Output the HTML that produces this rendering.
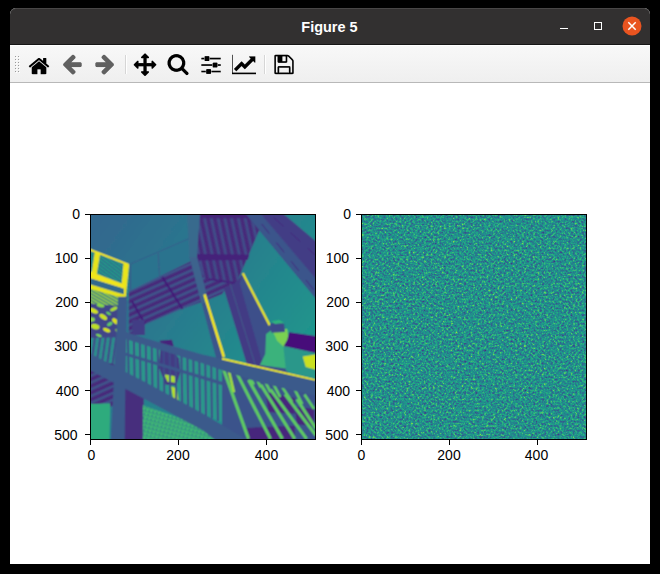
<!DOCTYPE html>
<html><head><meta charset="utf-8">
<style>
html,body{margin:0;padding:0;background:#000;width:660px;height:574px;overflow:hidden;font-family:"Liberation Sans",sans-serif;}
#win{position:absolute;left:10px;top:8px;width:640px;height:556px;background:#fff;border-radius:6px 6px 0 0;overflow:hidden;}
#title{position:absolute;left:0;top:0;width:640px;height:37px;background:#323030;border-radius:6px 6px 0 0;box-shadow:inset 0 1px 0 #484646, inset 0 -1px 0 #161616;}
#tb{position:absolute;left:0;top:37px;width:640px;height:37px;background:linear-gradient(#f8f8f8,#efefef);border-bottom:1px solid #b8b8b8;box-shadow:inset 0 1px 0 #fff;}
svg{position:absolute;left:0;top:0;}
.tl{font-family:"Liberation Sans",sans-serif;font-size:14px;fill:#000;}
.tt{font-family:"Liberation Sans",sans-serif;font-size:15px;font-weight:bold;fill:#fff;}
</style></head><body>
<div id="win"><div id="title"></div><div id="tb"></div></div>
<svg width="660" height="574" viewBox="0 0 660 574">
<text x="329.5" y="32" text-anchor="middle" class="tt" transform="translate(329.5 0) scale(0.965 1) translate(-329.5 0)">Figure 5</text>
<rect x="560" y="28" width="8" height="1" fill="#fff"/>
<rect x="594.5" y="22.5" width="7" height="7" fill="none" stroke="#fff" stroke-width="1"/>
<circle cx="632" cy="26" r="9.5" fill="#e95420"/>
<path d="M628.3 22.3 L635.7 29.7 M635.7 22.3 L628.3 29.7" stroke="#fff" stroke-width="1.5"/>
<rect x="15" y="56" width="1" height="1" fill="#9a9a9a"/><rect x="16" y="57" width="1" height="1" fill="#fff"/><rect x="15" y="59" width="1" height="1" fill="#9a9a9a"/><rect x="16" y="60" width="1" height="1" fill="#fff"/><rect x="15" y="62" width="1" height="1" fill="#9a9a9a"/><rect x="16" y="63" width="1" height="1" fill="#fff"/><rect x="15" y="65" width="1" height="1" fill="#9a9a9a"/><rect x="16" y="66" width="1" height="1" fill="#fff"/><rect x="15" y="68" width="1" height="1" fill="#9a9a9a"/><rect x="16" y="69" width="1" height="1" fill="#fff"/><rect x="15" y="71" width="1" height="1" fill="#9a9a9a"/><rect x="16" y="72" width="1" height="1" fill="#fff"/><rect x="18" y="56" width="1" height="1" fill="#9a9a9a"/><rect x="19" y="57" width="1" height="1" fill="#fff"/><rect x="18" y="59" width="1" height="1" fill="#9a9a9a"/><rect x="19" y="60" width="1" height="1" fill="#fff"/><rect x="18" y="62" width="1" height="1" fill="#9a9a9a"/><rect x="19" y="63" width="1" height="1" fill="#fff"/><rect x="18" y="65" width="1" height="1" fill="#9a9a9a"/><rect x="19" y="66" width="1" height="1" fill="#fff"/><rect x="18" y="68" width="1" height="1" fill="#9a9a9a"/><rect x="19" y="69" width="1" height="1" fill="#fff"/><rect x="18" y="71" width="1" height="1" fill="#9a9a9a"/><rect x="19" y="72" width="1" height="1" fill="#fff"/>
<rect x="125" y="55" width="1" height="19" fill="#d6d6d6"/><rect x="126" y="55" width="1" height="19" fill="#fff"/>
<rect x="264" y="55" width="1" height="19" fill="#d6d6d6"/><rect x="265" y="55" width="1" height="19" fill="#fff"/>
<g transform="translate(27 52)"><path fill-opacity="0.07" d="M6 9h1v1h-1zM1 14h1v1h-1zM22 14h1v1h-1zM10 22h1v1h-1zM13 22h1v1h-1z"/><path fill-opacity="0.13" d="M5 10h1v1h-1zM5 22h1v1h-1zM18 22h1v1h-1z"/><path fill-opacity="0.20" d="M8 11h1v1h-1zM15 11h1v1h-1zM7 12h1v1h-1zM16 12h1v1h-1zM2 15h1v1h-1zM4 15h1v1h-1zM20 15h2v1h-2zM4 21h1v1h-1zM6 22h4v1h-4zM14 22h4v1h-4z"/><path fill-opacity="0.27" d="M10 6h1v1h-1zM13 6h1v1h-1zM19 6h1v1h-1zM9 10h1v1h-1zM14 10h1v1h-1zM4 11h1v1h-1zM6 13h1v1h-1zM17 13h1v1h-1zM3 15h1v1h-1zM19 15h1v1h-1zM4 16h1v1h-1zM4 17h1v1h-1zM4 18h1v1h-1zM4 19h1v1h-1zM4 20h1v1h-1zM19 21h1v1h-1z"/><path fill-opacity="0.33" d="M19 7h1v1h-1zM19 8h1v1h-1zM11 9h1v1h-1zM13 9h1v1h-1zM19 9h1v1h-1zM19 10h1v1h-1zM19 14h1v1h-1zM19 16h1v1h-1zM11 17h2v1h-2zM19 17h1v1h-1zM13 18h1v1h-1zM19 18h1v1h-1zM13 19h1v1h-1zM19 19h1v1h-1zM13 20h1v1h-1zM19 20h1v1h-1zM13 21h1v1h-1z"/><path fill-opacity="0.40" d="M9 7h1v1h-1zM10 9h1v1h-1zM12 9h1v1h-1zM19 11h1v1h-1zM3 12h1v1h-1zM4 14h2v1h-2zM18 14h1v1h-1zM10 18h1v1h-1zM10 19h1v1h-1zM10 20h1v1h-1zM10 21h1v1h-1z"/><path fill-opacity="0.47" d="M14 7h1v1h-1zM20 12h1v1h-1z"/><path fill-opacity="0.53" d="M11 8h2v1h-2zM10 10h1v1h-1zM13 10h1v1h-1zM5 13h1v1h-1zM18 13h1v1h-1z"/><path fill-opacity="0.60" d="M8 8h1v1h-1zM15 8h1v1h-1zM2 13h1v1h-1zM21 13h1v1h-1zM10 17h1v1h-1zM13 17h1v1h-1z"/><path fill-opacity="0.67" d="M9 11h1v1h-1zM17 12h1v1h-1z"/><path fill-opacity="0.73" d="M7 9h1v1h-1zM14 11h1v1h-1zM6 12h1v1h-1z"/><path fill-opacity="0.80" d="M16 11h1v1h-1zM8 12h1v1h-1z"/><path fill-opacity="0.87" d="M16 6h1v1h-1zM6 10h1v1h-1zM7 11h1v1h-1zM15 12h1v1h-1z"/><path fill-opacity="0.93" d="M11 6h2v1h-2zM16 7h1v1h-1zM16 8h1v1h-1zM8 10h1v1h-1zM15 10h1v1h-1zM5 11h1v1h-1zM7 13h1v1h-1zM16 13h1v1h-1zM2 14h1v1h-1zM21 14h1v1h-1z"/><path d="M17 6h2v1h-2zM10 7h4v1h-4zM17 7h2v1h-2zM9 8h2v1h-2zM13 8h2v1h-2zM17 8h2v1h-2zM8 9h2v1h-2zM14 9h5v1h-5zM7 10h1v1h-1zM11 10h2v1h-2zM16 10h3v1h-3zM6 11h1v1h-1zM10 11h4v1h-4zM17 11h2v1h-2zM4 12h2v1h-2zM9 12h6v1h-6zM18 12h2v1h-2zM3 13h2v1h-2zM8 13h8v1h-8zM19 13h2v1h-2zM3 14h1v1h-1zM6 14h12v1h-12zM20 14h1v1h-1zM5 15h14v1h-14zM5 16h14v1h-14zM5 17h5v1h-5zM14 17h5v1h-5zM5 18h5v1h-5zM14 18h5v1h-5zM5 19h5v1h-5zM14 19h5v1h-5zM5 20h5v1h-5zM14 20h5v1h-5zM5 21h5v1h-5zM14 21h5v1h-5z"/></g>
<g transform="translate(60 52)" opacity="0.6"><path fill-opacity="0.07" d="M12 15h8v1h-8zM13 16h1v1h-1zM14 17h1v1h-1zM15 18h1v1h-1z"/><path fill-opacity="0.13" d="M12 2h2v1h-2zM15 6h1v1h-1zM14 7h1v1h-1zM13 8h1v1h-1zM12 9h1v1h-1zM21 10h1v1h-1z"/><path fill-opacity="0.27" d="M15 4h1v1h-1z"/><path fill-opacity="0.33" d="M21 14h1v1h-1zM13 22h1v1h-1z"/><path fill-opacity="0.40" d="M11 3h1v1h-1zM14 3h1v1h-1zM10 4h1v1h-1zM3 11h1v1h-1zM15 20h1v1h-1zM12 22h1v1h-1z"/><path fill-opacity="0.47" d="M9 5h1v1h-1zM8 6h1v1h-1zM7 7h1v1h-1zM6 8h1v1h-1zM5 9h1v1h-1zM4 10h1v1h-1zM15 19h1v1h-1z"/><path fill-opacity="0.53" d="M15 5h1v1h-1z"/><path fill-opacity="0.60" d="M3 13h1v1h-1zM14 21h1v1h-1z"/><path fill-opacity="0.67" d="M21 11h1v1h-1zM4 14h1v1h-1zM5 15h1v1h-1zM6 16h1v1h-1zM7 17h1v1h-1zM8 18h1v1h-1zM9 19h1v1h-1zM10 20h1v1h-1zM11 21h1v1h-1z"/><path fill-opacity="0.73" d="M20 10h1v1h-1zM21 12h1v1h-1zM21 13h1v1h-1zM12 16h1v1h-1zM13 17h1v1h-1zM14 18h1v1h-1z"/><path fill-opacity="0.80" d="M12 10h8v1h-8zM11 15h1v1h-1z"/><path fill-opacity="0.87" d="M11 10h1v1h-1zM3 12h1v1h-1z"/><path fill-opacity="0.93" d="M14 6h1v1h-1zM13 7h1v1h-1zM12 8h1v1h-1zM11 9h1v1h-1z"/><path d="M12 3h2v1h-2zM11 4h4v1h-4zM10 5h5v1h-5zM9 6h5v1h-5zM8 7h5v1h-5zM7 8h5v1h-5zM6 9h5v1h-5zM5 10h6v1h-6zM4 11h17v1h-17zM4 12h17v1h-17zM4 13h17v1h-17zM5 14h16v1h-16zM6 15h5v1h-5zM7 16h5v1h-5zM8 17h5v1h-5zM9 18h5v1h-5zM10 19h5v1h-5zM11 20h4v1h-4zM12 21h2v1h-2z"/></g>
<g transform="translate(93 52)" opacity="0.6"><path fill-opacity="0.07" d="M8 6h1v1h-1zM4 15h8v1h-8z"/><path fill-opacity="0.13" d="M10 2h2v1h-2zM9 7h1v1h-1zM10 8h1v1h-1zM11 9h1v1h-1zM2 10h1v1h-1z"/><path fill-opacity="0.20" d="M8 4h1v1h-1z"/><path fill-opacity="0.27" d="M2 14h1v1h-1z"/><path fill-opacity="0.33" d="M9 3h1v1h-1zM8 20h1v1h-1zM10 22h1v1h-1z"/><path fill-opacity="0.40" d="M8 19h1v1h-1zM11 22h1v1h-1z"/><path fill-opacity="0.47" d="M12 3h1v1h-1zM13 4h1v1h-1zM8 5h1v1h-1zM14 5h1v1h-1zM15 6h1v1h-1zM16 7h1v1h-1zM17 8h1v1h-1zM18 9h1v1h-1zM19 10h1v1h-1zM20 11h1v1h-1z"/><path fill-opacity="0.60" d="M9 21h1v1h-1z"/><path fill-opacity="0.67" d="M2 11h1v1h-1zM2 12h1v1h-1zM2 13h1v1h-1zM20 13h1v1h-1z"/><path fill-opacity="0.73" d="M3 10h1v1h-1zM19 14h1v1h-1zM12 15h1v1h-1zM18 15h1v1h-1zM11 16h1v1h-1zM17 16h1v1h-1zM10 17h1v1h-1zM16 17h1v1h-1zM9 18h1v1h-1zM15 18h1v1h-1zM14 19h1v1h-1zM13 20h1v1h-1zM12 21h1v1h-1z"/><path fill-opacity="0.80" d="M4 10h8v1h-8z"/><path fill-opacity="0.87" d="M9 6h1v1h-1zM10 7h1v1h-1zM11 8h1v1h-1zM12 9h1v1h-1zM12 10h1v1h-1zM20 12h1v1h-1z"/><path d="M10 3h2v1h-2zM9 4h4v1h-4zM9 5h5v1h-5zM10 6h5v1h-5zM11 7h5v1h-5zM12 8h5v1h-5zM13 9h5v1h-5zM13 10h6v1h-6zM3 11h17v1h-17zM3 12h17v1h-17zM3 13h17v1h-17zM3 14h16v1h-16zM13 15h5v1h-5zM12 16h5v1h-5zM11 17h5v1h-5zM10 18h5v1h-5zM9 19h5v1h-5zM9 20h4v1h-4zM10 21h2v1h-2z"/></g>
<g transform="translate(133 52)"><path fill-opacity="0.07" d="M5 8h1v1h-1zM18 8h1v1h-1zM0 13h1v1h-1zM23 13h1v1h-1zM1 14h1v1h-1zM22 14h1v1h-1zM2 15h1v1h-1zM21 15h1v1h-1zM3 16h1v1h-1zM20 16h1v1h-1zM8 21h1v1h-1zM15 21h1v1h-1zM9 22h1v1h-1zM14 22h1v1h-1zM10 23h1v1h-1zM13 23h1v1h-1z"/><path fill-opacity="0.13" d="M8 6h1v1h-1zM15 6h1v1h-1z"/><path fill-opacity="0.20" d="M4 8h1v1h-1zM0 12h1v1h-1z"/><path fill-opacity="0.27" d="M9 6h1v1h-1zM14 6h1v1h-1zM19 8h1v1h-1zM23 12h1v1h-1zM5 16h1v1h-1zM18 16h1v1h-1z"/><path fill-opacity="0.33" d="M11 1h1v1h-1zM6 14h4v1h-4zM14 14h4v1h-4z"/><path fill-opacity="0.40" d="M12 1h1v1h-1zM10 2h1v1h-1zM9 3h1v1h-1zM8 4h1v1h-1zM3 9h1v1h-1zM2 10h1v1h-1zM1 11h1v1h-1z"/><path fill-opacity="0.47" d="M13 2h1v1h-1zM14 3h1v1h-1zM15 4h1v1h-1zM18 9h1v1h-1zM20 9h1v1h-1zM21 10h1v1h-1zM22 11h1v1h-1zM18 15h1v1h-1z"/><path fill-opacity="0.53" d="M5 9h1v1h-1zM5 10h1v1h-1zM18 10h1v1h-1zM5 15h1v1h-1z"/><path fill-opacity="0.60" d="M10 7h1v1h-1zM10 8h1v1h-1zM10 9h1v1h-1zM10 10h1v1h-1zM10 15h1v1h-1zM10 16h1v1h-1zM10 17h1v1h-1zM10 18h1v1h-1z"/><path fill-opacity="0.67" d="M10 6h1v1h-1zM13 7h1v1h-1zM13 8h1v1h-1zM13 9h1v1h-1zM13 10h1v1h-1zM5 14h1v1h-1zM18 14h1v1h-1zM13 15h1v1h-1zM4 16h1v1h-1zM13 16h1v1h-1zM19 16h1v1h-1zM13 17h1v1h-1zM13 18h1v1h-1zM8 19h1v1h-1zM15 19h1v1h-1z"/><path fill-opacity="0.73" d="M13 6h1v1h-1zM10 14h1v1h-1zM13 14h1v1h-1z"/><path fill-opacity="0.80" d="M1 13h1v1h-1zM22 13h1v1h-1zM2 14h1v1h-1zM21 14h1v1h-1zM3 15h1v1h-1zM20 15h1v1h-1zM9 19h1v1h-1zM14 19h1v1h-1zM8 20h1v1h-1zM15 20h1v1h-1zM9 21h1v1h-1zM14 21h1v1h-1zM10 22h1v1h-1zM13 22h1v1h-1zM11 23h2v1h-2z"/><path fill-opacity="0.93" d="M8 5h1v1h-1zM5 11h6v1h-6zM13 11h6v1h-6zM10 19h1v1h-1zM13 19h1v1h-1z"/><path d="M11 2h2v1h-2zM10 3h4v1h-4zM9 4h6v1h-6zM9 5h7v1h-7zM11 6h2v1h-2zM11 7h2v1h-2zM11 8h2v1h-2zM4 9h1v1h-1zM11 9h2v1h-2zM19 9h1v1h-1zM3 10h2v1h-2zM11 10h2v1h-2zM19 10h2v1h-2zM2 11h3v1h-3zM11 11h2v1h-2zM19 11h3v1h-3zM1 12h22v1h-22zM2 13h20v1h-20zM3 14h2v1h-2zM11 14h2v1h-2zM19 14h2v1h-2zM4 15h1v1h-1zM11 15h2v1h-2zM19 15h1v1h-1zM11 16h2v1h-2zM11 17h2v1h-2zM11 18h2v1h-2zM11 19h2v1h-2zM9 20h6v1h-6zM10 21h4v1h-4zM11 22h2v1h-2z"/></g>
<g transform="translate(166 52)"><path fill-opacity="0.07" d="M18 6h1v1h-1zM5 12h1v1h-1zM1 13h1v1h-1zM20 23h1v1h-1z"/><path fill-opacity="0.13" d="M7 6h1v1h-1zM6 7h1v1h-1zM1 8h1v1h-1zM15 9h1v1h-1zM6 14h1v1h-1zM18 15h1v1h-1zM22 22h1v1h-1z"/><path fill-opacity="0.20" d="M14 7h1v1h-1zM19 9h1v1h-1zM15 12h1v1h-1zM19 12h1v1h-1zM2 15h1v1h-1zM7 15h1v1h-1zM22 20h1v1h-1z"/><path fill-opacity="0.27" d="M13 2h1v1h-1zM2 6h1v1h-1zM13 6h1v1h-1zM19 10h1v1h-1zM19 11h1v1h-1zM14 14h1v1h-1zM18 16h1v1h-1zM19 17h1v1h-1zM20 18h1v1h-1zM7 19h1v1h-1zM13 19h1v1h-1zM21 19h1v1h-1z"/><path fill-opacity="0.33" d="M15 3h1v1h-1zM9 5h2v1h-2zM13 15h1v1h-1zM16 19h1v1h-1zM17 20h1v1h-1zM18 21h1v1h-1zM19 22h1v1h-1z"/><path fill-opacity="0.40" d="M7 2h1v1h-1zM16 4h1v1h-1zM11 5h1v1h-1zM17 5h1v1h-1zM5 8h1v1h-1zM1 9h1v1h-1zM1 12h1v1h-1zM5 13h1v1h-1zM10 16h1v1h-1zM5 18h1v1h-1z"/><path fill-opacity="0.47" d="M5 3h1v1h-1zM18 7h1v1h-1zM1 10h1v1h-1zM1 11h1v1h-1zM3 16h1v1h-1zM9 16h1v1h-1zM11 16h1v1h-1zM4 17h1v1h-1z"/><path fill-opacity="0.53" d="M15 8h1v1h-1zM18 14h1v1h-1zM15 18h1v1h-1zM12 19h1v1h-1zM22 21h1v1h-1z"/><path fill-opacity="0.60" d="M4 4h1v1h-1zM3 5h1v1h-1zM15 13h1v1h-1z"/><path fill-opacity="0.67" d="M12 2h1v1h-1zM8 5h1v1h-1zM2 7h1v1h-1zM2 14h1v1h-1zM8 19h1v1h-1z"/><path fill-opacity="0.73" d="M8 2h1v1h-1z"/><path fill-opacity="0.80" d="M12 5h1v1h-1zM4 10h1v1h-1zM4 11h1v1h-1zM8 16h1v1h-1zM9 19h1v1h-1zM11 19h1v1h-1z"/><path fill-opacity="0.87" d="M9 2h1v1h-1zM11 2h1v1h-1zM14 3h1v1h-1zM6 6h1v1h-1zM5 7h1v1h-1zM18 8h1v1h-1zM18 13h1v1h-1zM5 14h1v1h-1zM6 15h1v1h-1zM12 16h1v1h-1zM6 18h1v1h-1zM14 18h1v1h-1zM10 19h1v1h-1z"/><path fill-opacity="0.93" d="M10 2h1v1h-1zM6 3h1v1h-1zM14 6h1v1h-1zM15 7h1v1h-1zM4 9h1v1h-1zM16 10h1v1h-1zM4 12h1v1h-1zM14 15h1v1h-1zM17 15h1v1h-1zM17 16h1v1h-1zM18 17h1v1h-1zM19 18h1v1h-1zM20 19h1v1h-1zM21 22h1v1h-1z"/><path d="M7 3h7v1h-7zM5 4h11v1h-11zM4 5h4v1h-4zM13 5h4v1h-4zM3 6h3v1h-3zM15 6h3v1h-3zM3 7h2v1h-2zM16 7h2v1h-2zM2 8h3v1h-3zM16 8h2v1h-2zM2 9h2v1h-2zM16 9h3v1h-3zM2 10h2v1h-2zM17 10h2v1h-2zM2 11h2v1h-2zM16 11h3v1h-3zM2 12h2v1h-2zM16 12h3v1h-3zM2 13h3v1h-3zM16 13h2v1h-2zM3 14h2v1h-2zM15 14h3v1h-3zM3 15h3v1h-3zM15 15h2v1h-2zM4 16h4v1h-4zM13 16h4v1h-4zM5 17h13v1h-13zM7 18h7v1h-7zM16 18h3v1h-3zM17 19h3v1h-3zM18 20h4v1h-4zM19 21h3v1h-3zM20 22h1v1h-1z"/></g>
<g transform="translate(199 52)"><path fill-opacity="0.07" d="M18 10h1v1h-1zM13 15h1v1h-1zM18 15h1v1h-1z"/><path fill-opacity="0.13" d="M2 5h1v1h-1z"/><path fill-opacity="0.20" d="M10 4h1v1h-1zM21 5h1v1h-1zM2 18h1v1h-1zM6 18h1v1h-1zM12 18h1v1h-1zM21 18h1v1h-1zM2 20h1v1h-1zM12 20h1v1h-1z"/><path fill-opacity="0.27" d="M5 4h1v1h-1zM3 5h2v1h-2zM11 5h10v1h-10zM2 7h1v1h-1zM21 7h1v1h-1zM10 8h1v1h-1zM3 18h3v1h-3zM13 18h8v1h-8zM6 20h1v1h-1zM21 20h1v1h-1z"/><path fill-opacity="0.33" d="M5 8h1v1h-1zM14 10h1v1h-1zM13 11h1v1h-1zM13 14h1v1h-1zM3 20h3v1h-3zM13 20h8v1h-8z"/><path fill-opacity="0.40" d="M3 7h2v1h-2zM11 7h10v1h-10zM15 10h3v1h-3z"/><path fill-opacity="0.47" d="M5 5h1v1h-1zM10 5h1v1h-1zM10 7h1v1h-1zM18 11h1v1h-1zM18 14h1v1h-1zM14 15h4v1h-4z"/><path fill-opacity="0.53" d="M5 7h1v1h-1zM2 12h1v1h-1zM13 12h1v1h-1zM13 13h1v1h-1z"/><path fill-opacity="0.60" d="M5 6h1v1h-1zM10 6h1v1h-1zM18 12h1v1h-1zM21 12h1v1h-1zM2 13h1v1h-1zM18 13h1v1h-1zM7 17h1v1h-1zM12 19h1v1h-1z"/><path fill-opacity="0.67" d="M2 6h1v1h-1zM21 13h1v1h-1zM2 19h1v1h-1zM7 21h1v1h-1z"/><path fill-opacity="0.73" d="M21 6h1v1h-1zM21 19h1v1h-1z"/><path fill-opacity="0.80" d="M3 12h10v1h-10zM19 12h2v1h-2zM11 17h1v1h-1zM6 19h1v1h-1zM11 21h1v1h-1z"/><path fill-opacity="0.87" d="M6 4h4v1h-4zM3 13h10v1h-10zM19 13h2v1h-2zM7 18h1v1h-1zM7 19h1v1h-1zM7 20h1v1h-1z"/><path fill-opacity="0.93" d="M8 17h3v1h-3zM8 21h3v1h-3z"/><path d="M6 5h4v1h-4zM3 6h2v1h-2zM6 6h4v1h-4zM11 6h10v1h-10zM6 7h4v1h-4zM6 8h4v1h-4zM14 11h4v1h-4zM14 12h4v1h-4zM14 13h4v1h-4zM14 14h4v1h-4zM8 18h4v1h-4zM3 19h3v1h-3zM8 19h4v1h-4zM13 19h8v1h-8zM8 20h4v1h-4z"/></g>
<g transform="translate(232 52)"><path fill-opacity="0.07" d="M10 9h1v1h-1zM11 10h1v1h-1zM12 11h1v1h-1zM12 17h1v1h-1z"/><path fill-opacity="0.13" d="M0 2h1v1h-1zM10 15h1v1h-1zM11 16h1v1h-1zM4 19h1v1h-1z"/><path fill-opacity="0.20" d="M23 4h1v1h-1zM23 10h1v1h-1zM8 15h1v1h-1zM7 16h1v1h-1zM6 17h1v1h-1zM5 18h1v1h-1zM0 22h24v1h-24z"/><path fill-opacity="0.27" d="M17 7h1v1h-1zM16 8h1v1h-1zM15 9h1v1h-1zM14 10h1v1h-1zM13 11h1v1h-1z"/><path fill-opacity="0.33" d="M23 5h1v1h-1zM23 6h1v1h-1zM23 7h1v1h-1zM23 8h1v1h-1zM23 9h1v1h-1zM9 14h1v1h-1z"/><path fill-opacity="0.40" d="M17 5h1v1h-1zM21 9h1v1h-1zM22 10h1v1h-1zM1 20h23v1h-23z"/><path fill-opacity="0.47" d="M9 9h1v1h-1z"/><path fill-opacity="0.53" d="M17 4h1v1h-1zM2 17h1v1h-1zM3 18h1v1h-1z"/><path fill-opacity="0.60" d="M18 4h5v1h-5zM18 6h1v1h-1z"/><path fill-opacity="0.67" d="M0 3h1v1h-1zM0 4h1v1h-1zM0 5h1v1h-1zM0 6h1v1h-1zM0 7h1v1h-1zM0 8h1v1h-1zM0 9h1v1h-1zM20 9h1v1h-1zM0 10h1v1h-1zM8 10h1v1h-1zM19 10h1v1h-1zM0 11h1v1h-1zM7 11h1v1h-1zM18 11h1v1h-1zM0 12h1v1h-1zM6 12h1v1h-1zM17 12h1v1h-1zM0 13h1v1h-1zM5 13h1v1h-1zM16 13h1v1h-1zM0 14h1v1h-1zM4 14h1v1h-1zM15 14h1v1h-1zM0 15h1v1h-1zM3 15h1v1h-1zM14 15h1v1h-1zM0 16h1v1h-1zM2 16h1v1h-1zM13 16h1v1h-1zM0 17h1v1h-1zM0 18h1v1h-1zM0 19h1v1h-1z"/><path fill-opacity="0.80" d="M10 10h1v1h-1zM11 11h1v1h-1zM12 12h1v1h-1zM0 20h1v1h-1z"/><path fill-opacity="0.87" d="M10 14h1v1h-1zM11 15h1v1h-1zM12 16h1v1h-1z"/><path fill-opacity="0.93" d="M18 7h1v1h-1zM17 8h1v1h-1zM16 9h1v1h-1zM15 10h1v1h-1zM14 11h1v1h-1zM13 12h1v1h-1zM8 14h1v1h-1zM7 15h1v1h-1zM6 16h1v1h-1zM5 17h1v1h-1zM4 18h1v1h-1z"/><path d="M18 5h5v1h-5zM19 6h4v1h-4zM19 7h4v1h-4zM18 8h5v1h-5zM17 9h3v1h-3zM22 9h1v1h-1zM9 10h1v1h-1zM16 10h3v1h-3zM8 11h3v1h-3zM15 11h3v1h-3zM7 12h5v1h-5zM14 12h3v1h-3zM6 13h10v1h-10zM5 14h3v1h-3zM11 14h4v1h-4zM4 15h3v1h-3zM12 15h2v1h-2zM3 16h3v1h-3zM3 17h2v1h-2zM0 21h24v1h-24z"/></g>
<g transform="translate(272 52)"><path fill-opacity="0.07" d="M15 10h1v1h-1z"/><path fill-opacity="0.13" d="M16 5h1v1h-1zM17 6h1v1h-1zM18 7h1v1h-1zM21 7h1v1h-1zM5 10h1v1h-1zM5 14h1v1h-1zM16 16h1v1h-1zM16 17h1v1h-1zM16 18h1v1h-1zM16 19h1v1h-1zM3 22h1v1h-1zM20 22h1v1h-1z"/><path fill-opacity="0.20" d="M3 2h1v1h-1zM15 2h1v1h-1zM19 8h1v1h-1zM18 14h1v1h-1zM7 16h1v1h-1zM7 17h1v1h-1zM7 18h1v1h-1zM7 19h1v1h-1zM4 22h16v1h-16z"/><path fill-opacity="0.27" d="M4 2h11v1h-11zM17 3h1v1h-1zM18 4h1v1h-1zM15 5h1v1h-1zM19 5h1v1h-1zM15 6h1v1h-1zM20 6h1v1h-1zM15 7h1v1h-1zM15 8h1v1h-1zM15 9h1v1h-1z"/><path fill-opacity="0.33" d="M13 5h1v1h-1zM13 6h1v1h-1zM13 7h1v1h-1zM13 8h1v1h-1z"/><path fill-opacity="0.40" d="M4 4h1v1h-1zM11 4h2v1h-2zM10 5h1v1h-1zM10 6h1v1h-1zM10 7h1v1h-1zM10 8h1v1h-1z"/><path fill-opacity="0.47" d="M5 5h1v1h-1zM5 6h1v1h-1zM5 7h1v1h-1zM5 8h1v1h-1zM5 9h1v1h-1zM5 15h1v1h-1zM18 15h1v1h-1zM5 16h1v1h-1zM5 17h1v1h-1zM5 18h1v1h-1zM5 19h1v1h-1zM4 20h1v1h-1zM8 20h9v1h-9zM19 20h1v1h-1zM2 21h1v1h-1z"/><path fill-opacity="0.53" d="M2 3h1v1h-1zM18 16h1v1h-1zM18 17h1v1h-1zM18 18h1v1h-1zM18 19h1v1h-1zM7 20h1v1h-1zM21 21h1v1h-1z"/><path fill-opacity="0.60" d="M15 4h1v1h-1zM21 8h1v1h-1z"/><path fill-opacity="0.67" d="M2 4h1v1h-1zM5 4h1v1h-1zM10 4h1v1h-1zM13 4h1v1h-1zM2 5h1v1h-1zM2 6h1v1h-1zM2 7h1v1h-1zM2 8h1v1h-1zM2 9h1v1h-1zM2 10h1v1h-1zM14 10h1v1h-1zM2 11h1v1h-1zM2 12h1v1h-1zM2 13h1v1h-1zM2 14h1v1h-1zM2 15h1v1h-1zM2 16h1v1h-1zM2 17h1v1h-1zM2 18h1v1h-1zM2 19h1v1h-1zM2 20h1v1h-1zM5 20h1v1h-1z"/><path fill-opacity="0.73" d="M21 9h1v1h-1zM21 10h1v1h-1zM21 11h1v1h-1zM21 12h1v1h-1zM21 13h1v1h-1zM21 14h1v1h-1zM7 15h10v1h-10zM21 15h1v1h-1zM21 16h1v1h-1zM21 17h1v1h-1zM21 18h1v1h-1zM21 19h1v1h-1zM18 20h1v1h-1zM21 20h1v1h-1z"/><path fill-opacity="0.80" d="M11 9h2v1h-2zM6 10h1v1h-1z"/><path fill-opacity="0.87" d="M16 3h1v1h-1zM10 9h1v1h-1zM13 9h1v1h-1zM20 9h1v1h-1zM7 10h7v1h-7zM20 10h1v1h-1zM20 11h1v1h-1zM20 12h1v1h-1zM20 13h1v1h-1zM6 14h1v1h-1zM17 14h1v1h-1zM20 14h1v1h-1zM20 15h1v1h-1zM20 16h1v1h-1zM20 17h1v1h-1zM20 18h1v1h-1zM20 19h1v1h-1z"/><path fill-opacity="0.93" d="M3 4h1v1h-1zM16 4h2v1h-2zM3 5h1v1h-1zM17 5h2v1h-2zM3 6h1v1h-1zM18 6h2v1h-2zM3 7h1v1h-1zM19 7h2v1h-2zM3 8h1v1h-1zM3 9h1v1h-1zM3 10h1v1h-1zM3 11h1v1h-1zM3 12h1v1h-1zM3 13h1v1h-1zM3 14h1v1h-1zM7 14h10v1h-10zM3 15h1v1h-1zM3 16h1v1h-1zM3 17h1v1h-1zM3 18h1v1h-1zM3 19h1v1h-1zM3 20h1v1h-1zM20 20h1v1h-1z"/><path d="M3 3h13v1h-13zM6 4h4v1h-4zM14 4h1v1h-1zM6 5h4v1h-4zM14 5h1v1h-1zM6 6h4v1h-4zM14 6h1v1h-1zM6 7h4v1h-4zM14 7h1v1h-1zM6 8h4v1h-4zM14 8h1v1h-1zM20 8h1v1h-1zM6 9h4v1h-4zM14 9h1v1h-1zM6 15h1v1h-1zM17 15h1v1h-1zM6 16h1v1h-1zM17 16h1v1h-1zM6 17h1v1h-1zM17 17h1v1h-1zM6 18h1v1h-1zM17 18h1v1h-1zM6 19h1v1h-1zM17 19h1v1h-1zM6 20h1v1h-1zM17 20h1v1h-1zM3 21h18v1h-18z"/></g>
<g transform="translate(0 1)">
<g transform="translate(90 213) scale(0.44033203125)">
<clipPath id="cl"><rect x="0" y="0" width="512" height="512"/></clipPath>
<filter id="bl" x="-5%" y="-5%" width="110%" height="110%"><feConvolveMatrix order="3" kernelMatrix="1 2 1 2 4 2 1 2 1" divisor="16" edgeMode="duplicate"/></filter>
<g clip-path="url(#cl)"><g filter="url(#bl)"><g transform="translate(0 -2.27)">
<defs>
<linearGradient id="sky" gradientUnits="userSpaceOnUse" x1="0" y1="0" x2="470" y2="320"><stop offset="0" stop-color="#32668e"/><stop offset="0.5" stop-color="#297a8e"/><stop offset="1" stop-color="#1f948c"/></linearGradient>
<pattern id="hatch" patternUnits="userSpaceOnUse" width="6.5" height="6.5" patternTransform="rotate(38)"><rect width="6.5" height="6.5" fill="#22a785"/><rect width="6.5" height="3.2" fill="#2e618e"/></pattern>
<pattern id="slats" patternUnits="userSpaceOnUse" width="14" height="14" patternTransform="rotate(-24)"><rect width="14" height="14" fill="#472a7a"/><rect width="14" height="5.5" fill="#3e558b"/></pattern>
<pattern id="slats2" patternUnits="userSpaceOnUse" width="15" height="15" patternTransform="rotate(78)"><rect width="15" height="15" fill="#472b7a"/><rect width="15" height="6" fill="#3f4d89"/></pattern>
<pattern id="balL" patternUnits="userSpaceOnUse" width="12" height="12" patternTransform="rotate(8)"><rect width="12" height="12" fill="#2a8f8c"/><rect width="5" height="12" fill="#404a89"/></pattern>
<pattern id="fol" patternUnits="userSpaceOnUse" width="9" height="9" patternTransform="rotate(15)"><rect width="9" height="9" fill="#3fbc73"/><rect x="2" y="1" width="2.5" height="6" fill="#2c6f8e"/><rect x="6" y="5" width="2.5" height="3" fill="#2f6c8e"/></pattern>
<pattern id="hatchY" patternUnits="userSpaceOnUse" width="6.5" height="6.5" patternTransform="rotate(30)"><rect width="6.5" height="6.5" fill="#a8db34"/><rect width="6.5" height="3.2" fill="#2c718e"/></pattern>
</defs>
<rect x="-12" y="-12" width="536" height="536" fill="url(#sky)"/>
<polygon points="-10,77 90,116 86,200 -10,200" fill="url(#hatch)"/>
<polygon points="-10,169 77,194 74,216 -10,212" fill="url(#hatchY)"/>
<polygon points="-10,205 74,212 72,284 -10,286" fill="#404588"/>
<ellipse cx="8" cy="222" rx="11" ry="5" fill="#d2e21b" transform="rotate(25 8 222)"/>
<ellipse cx="30" cy="236" rx="10" ry="5" fill="#c9e020" transform="rotate(35 30 236)"/>
<ellipse cx="54" cy="218" rx="9" ry="4" fill="#a8db34" transform="rotate(-25 54 218)"/>
<ellipse cx="58" cy="246" rx="9" ry="5" fill="#d8e219" transform="rotate(40 58 246)"/>
<ellipse cx="12" cy="258" rx="10" ry="6" fill="#bddf26" transform="rotate(15 12 258)"/>
<ellipse cx="38" cy="266" rx="9" ry="4" fill="#d8e219" transform="rotate(25 38 266)"/>
<ellipse cx="24" cy="210" rx="9" ry="4" fill="#86d449" transform="rotate(10 24 210)"/>
<ellipse cx="62" cy="268" rx="6" ry="3" fill="#9bd93c" transform="rotate(50 62 268)"/>
<ellipse cx="45" cy="252" rx="7" ry="4" fill="#5ec962" transform="rotate(-30 45 252)"/>
<ellipse cx="4" cy="242" rx="7" ry="5" fill="#86d449" transform="rotate(0 4 242)"/>
<ellipse cx="42" cy="228" rx="6" ry="3" fill="#5ec962" transform="rotate(30 42 228)"/>
<ellipse cx="20" cy="278" rx="7" ry="3" fill="#7ad151" transform="rotate(20 20 278)"/>
<polygon points="-10,77 88,115 88,120 -10,82" fill="#f4e61e"/>
<polygon points="76,115 89,117 80,203 68,203" fill="#e9e41c"/>
<polygon points="11,88 23,93 15,141 3,141" fill="#e6e31b"/>
<polygon points="-10,129 77,162 77,172 -10,145" fill="#f0e51d"/>
<polygon points="-10,145 77,172 77,185 -10,159" fill="#30698e"/>
<polygon points="-10,159 77,185 77,194 -10,169" fill="#e4e31a"/>
<polygon points="90,117 225,58 236,110 90,178" fill="#2c738e"/>
<line x1="90" y1="117" x2="225" y2="58" stroke="#38598c" stroke-width="1.8"/>
<line x1="90" y1="178" x2="230" y2="111" stroke="#3a578b" stroke-width="2.5"/>
<line x1="155" y1="90" x2="158" y2="147" stroke="#3a588b" stroke-width="2"/>
<line x1="92" y1="117" x2="92" y2="178" stroke="#3a588b" stroke-width="2.5"/>
<polygon points="238,116 250,0 383,0 390,25 334,156 306,175 300,184 262,199 204,220 124,254 124,277 88,277 88,178 228,110" fill="url(#slats)"/>
<polygon points="250,0 383,0 390,25 334,156 262,150 238,116" fill="url(#slats2)"/>
<polygon points="240,93 362,95 358,107 238,108" fill="#45237a"/>
<polygon points="253,0 383,0 382,12 252,12" fill="#45257a"/>
<line x1="164" y1="145" x2="210" y2="218" stroke="#431a78" stroke-width="5"/>
<line x1="95" y1="200" x2="125" y2="252" stroke="#431a78" stroke-width="5"/>
<line x1="270" y1="150" x2="330" y2="159" stroke="#44207a" stroke-width="4"/>
<polygon points="96,243 124,243 124,277 96,277" fill="#433e85"/>
<polygon points="226,100 243,100 353,522 337,522" fill="#3b558b"/>
<polygon points="226,100 243,100 270,205 253,205" fill="#3d648d"/>
<polygon points="220,-5 250,-5 243,100 226,100" fill="#386a8d"/>
<line x1="260" y1="185" x2="304" y2="327" stroke="#f0e51d" stroke-width="6"/>
<polygon points="348,-5 431,-5 522,72 522,205" fill="#433e85"/>
<polygon points="348,-5 382,-5 522,160 522,205" fill="#3b558b"/>
<line x1="417" y1="10" x2="511" y2="95" stroke="#46187a" stroke-width="1.8" stroke-dasharray="30 22"/>
<line x1="390" y1="25" x2="511" y2="178" stroke="#46187a" stroke-width="1.8" stroke-dasharray="28 26"/>
<polygon points="331,159 347,137 408,255 440,320 450,370 362,362 304,172" fill="#433b84"/>
<polygon points="347,137 408,255 440,320 450,370 400,370 340,160" fill="#3c4f8a"/>
<line x1="347" y1="137" x2="408" y2="255" stroke="#e8e41c" stroke-width="5"/>
<line x1="318" y1="160" x2="380" y2="360" stroke="#3f6a8d" stroke-width="1.5"/>
<polygon points="-10,284 70,282 68,345 -10,330" fill="url(#balL)"/>
<polygon points="-10,330 66,345 62,440 -10,440" fill="url(#slats)"/>
<polygon points="-10,434 46,432 44,522 -10,522" fill="#2fab7d"/>
<polygon points="78,395 122,410 122,522 78,522" fill="#472f7d"/>
<polygon points="120,436 300,500 300,522 120,522" fill="url(#fol)"/>
<polygon points="78,275 300,335 300,475 78,380" fill="#2a978b"/>
<polygon points="158,290 186,288 190,302 165,304" fill="#46207a"/>
<polygon points="160,310 182,308 202,330 205,362 196,392 172,390 156,350" fill="#433a83"/>
<polygon points="168,366 192,370 197,386 176,383" fill="#a8db34"/>
<polygon points="184,394 197,398 201,425 189,421" fill="#b5de2b"/>
<line x1="86.0" y1="277.2" x2="88.0" y2="385.4" stroke="#3e4c8a" stroke-width="4.5"/>
<line x1="99.5" y1="280.8" x2="101.5" y2="391.2" stroke="#3e4c8a" stroke-width="4.5"/>
<line x1="113.0" y1="284.4" x2="115.0" y2="397.1" stroke="#3e4c8a" stroke-width="4.5"/>
<line x1="126.5" y1="288.1" x2="128.5" y2="402.9" stroke="#3e4c8a" stroke-width="4.5"/>
<line x1="140.0" y1="291.7" x2="142.0" y2="408.7" stroke="#3e4c8a" stroke-width="4.5"/>
<line x1="153.5" y1="295.4" x2="155.5" y2="414.5" stroke="#3e4c8a" stroke-width="4.5"/>
<line x1="167.0" y1="299.0" x2="169.0" y2="420.3" stroke="#3e4c8a" stroke-width="4.5"/>
<line x1="180.5" y1="302.7" x2="182.5" y2="426.1" stroke="#3e4c8a" stroke-width="4.5"/>
<line x1="194.0" y1="306.3" x2="196.0" y2="431.9" stroke="#3e4c8a" stroke-width="4.5"/>
<line x1="207.5" y1="310.0" x2="209.5" y2="437.7" stroke="#3e4c8a" stroke-width="4.5"/>
<line x1="221.0" y1="313.6" x2="223.0" y2="443.5" stroke="#3e4c8a" stroke-width="4.5"/>
<line x1="234.5" y1="317.3" x2="236.5" y2="449.3" stroke="#3e4c8a" stroke-width="4.5"/>
<line x1="248.0" y1="320.9" x2="250.0" y2="455.1" stroke="#3e4c8a" stroke-width="4.5"/>
<line x1="261.5" y1="324.5" x2="263.5" y2="460.9" stroke="#3e4c8a" stroke-width="4.5"/>
<line x1="275.0" y1="328.2" x2="277.0" y2="466.7" stroke="#3e4c8a" stroke-width="4.5"/>
<line x1="288.5" y1="331.8" x2="290.5" y2="472.5" stroke="#3e4c8a" stroke-width="4.5"/>
<line x1="302.0" y1="335.5" x2="304.0" y2="478.3" stroke="#3e4c8a" stroke-width="4.5"/>
<polygon points="78,316 300,383 300,391 78,323" fill="#3b578b"/>
<polygon points="300,335 522,385 522,522 300,522" fill="#3b528b"/>
<polygon points="399,407 465,420 465,456 405,452" fill="#46287b"/>
<polygon points="465,440 509,445 509,484 470,480" fill="#46257a"/>
<polygon points="355,488 465,483 465,522 355,522" fill="#46287b"/>
<line x1="300" y1="346" x2="360" y2="513" stroke="#5ec962" stroke-width="7"/>
<line x1="333" y1="363" x2="410" y2="513" stroke="#5ec962" stroke-width="7"/>
<line x1="360" y1="379" x2="437" y2="513" stroke="#5ec962" stroke-width="7"/>
<line x1="388" y1="390" x2="465" y2="513" stroke="#5ec962" stroke-width="7"/>
<line x1="410" y1="401" x2="492" y2="513" stroke="#5ec962" stroke-width="7"/>
<line x1="443" y1="412" x2="513" y2="505" stroke="#5ec962" stroke-width="7"/>
<line x1="470" y1="423" x2="513" y2="489" stroke="#5ec962" stroke-width="7"/>
<line x1="311" y1="341" x2="327" y2="407" stroke="#9bd93c" stroke-width="6"/>
<line x1="355" y1="357" x2="372" y2="390" stroke="#5ec962" stroke-width="6"/>
<line x1="371" y1="363" x2="388" y2="396" stroke="#5ec962" stroke-width="6"/>
<line x1="393" y1="374" x2="410" y2="407" stroke="#5ec962" stroke-width="6"/>
<line x1="415" y1="385" x2="432" y2="418" stroke="#5ec962" stroke-width="6"/>
<line x1="437" y1="396" x2="459" y2="429" stroke="#5ec962" stroke-width="6"/>
<line x1="465" y1="401" x2="482" y2="434" stroke="#5ec962" stroke-width="6"/>
<line x1="487" y1="412" x2="509" y2="445" stroke="#5ec962" stroke-width="6"/>
<polygon points="70,267 78,269 127,285 257,322 382,348 522,379 522,418 382,384 300,357 257,342 127,301 78,285 70,283" fill="#3b5a8b"/>
<line x1="300" y1="331" x2="511" y2="379" stroke="#e8e41c" stroke-width="4.5"/>
<polygon points="-10,314 127,385 257,456 340,505 360,520 290,520 257,494 127,424 -10,352" fill="#3a5a8b"/>
<polygon points="64,190 84,190 78,522 47,522" fill="#3b5a8b"/>
<polygon points="400,275 412,266 450,264 455,300 445,353 386,345 398,320" fill="#3bb27c"/>
<polygon points="439,302 522,320 522,380 445,358" fill="#2c978a"/>
<polygon points="414,266 447,263 452,290 440,304 425,290" fill="#7ad151"/>
<polygon points="452,271 522,281 522,320 440,302 448,288" fill="#46107a"/>
<polygon points="483,326 522,320 522,358 490,350" fill="#c9e020"/>
<polygon points="409,252 425,246 441,252 443,270 412,272" fill="#3e4a89"/>
<polygon points="412,246 430,243 441,250 420,252" fill="#2fb47c"/>
</g></g>
</g></g>
<filter id="nz" x="362" y="214" width="224" height="224" filterUnits="userSpaceOnUse" color-interpolation-filters="sRGB">
<feTurbulence type="fractalNoise" baseFrequency="0.45" numOctaves="3" seed="7" stitchTiles="noStitch"/>
<feColorMatrix type="matrix" values="0.85 0 0 0 0.07500000000000001  0.85 0 0 0 0.07500000000000001  0.85 0 0 0 0.07500000000000001  0 0 0 0 1"/>
<feComponentTransfer><feFuncR type="table" tableValues="0.267 0.282 0.279 0.259 0.230 0.199 0.173 0.149 0.128 0.121 0.158 0.246 0.369 0.516 0.678 0.846 0.993"/><feFuncG type="table" tableValues="0.005 0.095 0.175 0.252 0.322 0.388 0.449 0.508 0.567 0.626 0.684 0.739 0.789 0.831 0.864 0.887 0.906"/><feFuncB type="table" tableValues="0.329 0.417 0.483 0.525 0.546 0.555 0.558 0.557 0.551 0.533 0.502 0.452 0.383 0.294 0.190 0.100 0.144"/></feComponentTransfer>
</filter>
<rect x="362" y="214" width="224" height="224" fill="#21918c" filter="url(#nz)"/>
<g fill="#000" shape-rendering="crispEdges">
<rect x="90" y="213" width="226" height="1"/><rect x="90" y="438" width="226" height="1"/>
<rect x="90" y="213" width="1" height="226"/><rect x="315" y="213" width="1" height="226"/>
<rect x="361" y="213" width="226" height="1"/><rect x="361" y="438" width="226" height="1"/>
<rect x="361" y="213" width="1" height="226"/><rect x="586" y="213" width="1" height="226"/>
<rect x="85" y="213" width="5" height="1"/>
<text x="80" y="218" text-anchor="end" class="tl">0</text>
<rect x="356" y="213" width="5" height="1"/>
<text x="351" y="218" text-anchor="end" class="tl">0</text>
<rect x="85" y="257" width="5" height="1"/>
<text x="78" y="262" text-anchor="end" class="tl">100</text>
<rect x="356" y="257" width="5" height="1"/>
<text x="349" y="262" text-anchor="end" class="tl">100</text>
<rect x="85" y="301" width="5" height="1"/>
<text x="78.5" y="306" text-anchor="end" class="tl">200</text>
<rect x="356" y="301" width="5" height="1"/>
<text x="349.5" y="306" text-anchor="end" class="tl">200</text>
<rect x="85" y="345" width="5" height="1"/>
<text x="77.5" y="350" text-anchor="end" class="tl">300</text>
<rect x="356" y="345" width="5" height="1"/>
<text x="348.5" y="350" text-anchor="end" class="tl">300</text>
<rect x="85" y="389" width="5" height="1"/>
<text x="79" y="395" text-anchor="end" class="tl">400</text>
<rect x="356" y="389" width="5" height="1"/>
<text x="350" y="395" text-anchor="end" class="tl">400</text>
<rect x="85" y="433" width="5" height="1"/>
<text x="77.5" y="439" text-anchor="end" class="tl">500</text>
<rect x="356" y="433" width="5" height="1"/>
<text x="348.5" y="439" text-anchor="end" class="tl">500</text>
<rect x="90" y="439" width="1" height="5"/>
<text x="91.5" y="459" text-anchor="middle" class="tl">0</text>
<rect x="361" y="439" width="1" height="5"/>
<text x="361.5" y="459" text-anchor="middle" class="tl">0</text>
<rect x="178" y="439" width="1" height="5"/>
<text x="178.0" y="459" text-anchor="middle" class="tl">200</text>
<rect x="449" y="439" width="1" height="5"/>
<text x="449.0" y="459" text-anchor="middle" class="tl">200</text>
<rect x="266" y="439" width="1" height="5"/>
<text x="266.5" y="459" text-anchor="middle" class="tl">400</text>
<rect x="537" y="439" width="1" height="5"/>
<text x="536.5" y="459" text-anchor="middle" class="tl">400</text>
</g>
</g>
</svg>
</body></html>
